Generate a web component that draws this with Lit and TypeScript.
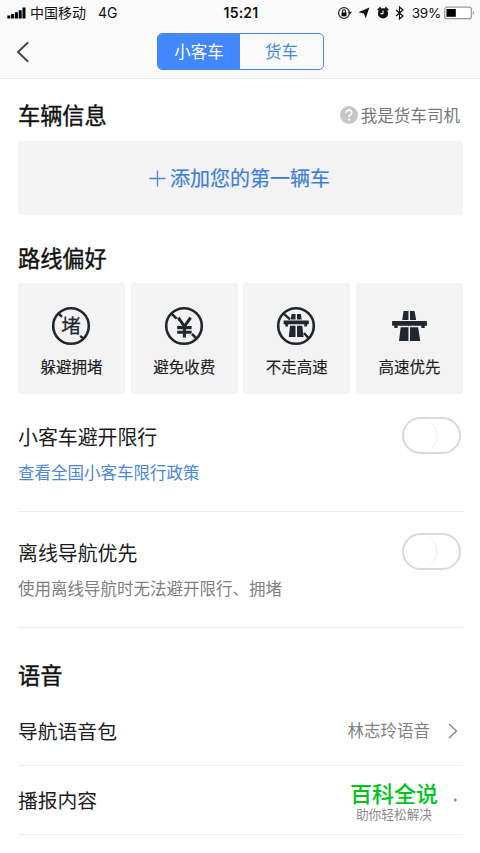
import { LitElement, html, svg, css } from "lit";
import { customElement, property } from "lit/decorators.js";

const INK = "#22262f";

const ban = (inner: unknown) => svg`
  <circle cx="20" cy="20" r="17.8" fill="none" stroke=${INK} stroke-width="2.6"/>
  ${inner}`;

const icons: Record<string, unknown> = {
  jam: ban(svg`
    <path d="M7.600 7.600l3.400 3.200M29.200 29.800l3.600 3" fill="none" stroke=${INK} stroke-width="2.400"/>
    <text x="20" y="27" text-anchor="middle" class="glyph">堵</text>`),
  toll: ban(svg`
    <path d="M7.600 7.600l5 5M28 28l5 5" stroke=${INK} stroke-width="2.600"/>
    <path d="M14.200 11.700l6.200 8.700 6.200-8.700M13.200 21.600h14.400M13.200 26.300h14.400M20.400 20v11.500" fill="none" stroke=${INK} stroke-width="3.100"/>`),
  noHighway: ban(svg`
    <path d="M7.400 7.400l6.600 6M28 27l5 5.600" stroke=${INK} stroke-width="2.400"/>
    <path d="M15.600 8h3.900v5.600h-4.700zM21 8h3.900l.8 5.600H21zM7.600 14.400h25.200v3.900h-1.700v2.300h-2.800v-2.300h-16.200v2.300H9.300v-2.300H7.600zM14 19.800h5.500V31h-6.700zM21 19.800h5.300L27.600 31H21z" fill=${INK}/>`),
  highway: svg`
    <path d="M14.600 4.900h4.900v9.100h-6.300zM21 4.900h4.500l1.700 9.100H21zM3.100 14.900h34.800v4.800h-2.200v2.300h-3.300v-2.300H8.600V22H5.300v-2.300H3.100zM11.700 21.200h7.800v13.700h-9.500zM21 21.200h8.100l2.200 13.700H21z" fill=${INK}/>`,
};

@customElement("pref-card")
class PrefCard extends LitElement {
  @property() icon = "";
  @property() label = "";
  static styles = css`
    :host { display: flex; flex-direction: column; align-items: center; background: #f3f3f3; border-radius: 3px; height: 111px; box-sizing: border-box; padding-top: 23px; }
    svg { display: block; width: 40px; height: 40px; margin-right: 1px; }
    .glyph { font: 400 19.5px "Noto Sans CJK SC", sans-serif; fill: #22262f; stroke: #22262f; stroke-width: .25px; }
    .label { margin-top: 8px; line-height: 24px; font-size: 15.5px; -webkit-text-stroke: .15px #1c1c1e; color: #1c1c1e; white-space: nowrap; }
  `;
  render() {
    return html`<svg viewBox="0 0 40 40">${icons[this.icon]}</svg><div class="label">${this.label}</div>`;
  }
}

@customElement("switch-row")
class SwitchRow extends LitElement {
  @property() heading = "";
  @property() note = "";
  @property({ type: Boolean }) link = false;
  static styles = css`
    :host { display: flex; justify-content: space-between; height: 116px; box-sizing: border-box; border-bottom: 1px solid #ededed; padding: 21px 2.5px 0 0; }
    .heading { font-size: 19.9px; line-height: 40px; color: #1c1c1e; }
    .note { font-size: 16.5px; line-height: 30px; color: #808080; }
    .link { color: #4a86dc; }
    .switch { width: 59px; height: 37px; box-sizing: border-box; border: 2px solid #d9d9d9; border-radius: 19px; background: #fff; }
    .knob { width: 34px; height: 33px; border-radius: 17px; box-sizing: border-box; border-right: 2px solid #f3f3f3; }
  `;
  render() {
    return html`
      <div>
        <div class="heading">${this.heading}</div>
        <div class="note ${this.link ? "link" : ""}">${this.note}</div>
      </div>
      <div class="switch"><div class="knob"></div></div>`;
  }
}

@customElement("app-root")
class AppRoot extends LitElement {
  static styles = css`
    :host { display: block; width: 480px; height: 853px; overflow: hidden; background: #fff; color: #1c1c1e; font-family: "Noto Sans CJK SC", sans-serif; }
    svg { display: block; }
    .top { height: 79px; box-sizing: border-box; background: #fafafa; border-bottom: 1px solid #ebebeb; }
    .status { display: grid; grid-template-columns: 1fr auto 1fr; align-items: center; height: 25px; padding: 0 5px 0 7px; color: #111; }
    .left, .right { display: flex; align-items: center; }
    .right { justify-content: flex-end; }
    .carrier { font-size: 14px; line-height: 22px; margin: 0 0 2px 4px; }
    .net { font: 14px/24px Inter, sans-serif; margin-left: 12px; }
    .time { font: 600 14px/24px Inter, sans-serif; letter-spacing: .2px; }
    .percent { font: 13.5px/24px Inter, sans-serif; margin: 0 3px 0 2px; letter-spacing: -.2px; }
    .nav { display: grid; grid-template-columns: 157px 167px; height: 53px; align-items: center; }
    .back { margin-left: 16px; }
    .tabs { display: grid; grid-template-columns: 82px 1fr; height: 37px; box-sizing: border-box; border: 1px solid #4a8ade; border-radius: 5px; overflow: hidden; font-size: 16.5px; line-height: 35px; text-align: center; }
    .tab { color: #4a8ade; }
    .on { background: #4287fb; color: #fff; }
    .main { padding: 0 17px 0 18px; }
    .title { font-size: 22.2px; -webkit-text-stroke: .4px #111; line-height: 32px; color: #111; }
    .head { display: flex; justify-content: space-between; align-items: center; height: 32px; padding: 19px 3px 11px 0; }
    .driver { display: flex; align-items: center; gap: 3px; padding-top: 2px; font-size: 16.55px; line-height: 30px; color: #777; }
    .add { display: flex; align-items: center; justify-content: center; gap: 4px; height: 74px; padding-right: 2px; border-radius: 4px; background: #f3f3f3; color: #3f7edb; font-size: 20px; -webkit-text-stroke: .2px #3f7edb; line-height: 30px; }
    .route { margin-top: 26px; }
    .cards { display: grid; grid-template-columns: repeat(4, 107px); justify-content: space-between; margin-top: 10px; }
    .switches { padding-top: 2px; }
    .voice { margin-top: 30px; }
    .rows { padding-top: 7px; }
    .row { display: flex; align-items: center; height: 69px; box-sizing: border-box; border-bottom: 1px solid #ededed; padding-right: 5px; font-size: 19.8px; }
    .name, .value { padding-bottom: 2px; }
    .value { margin-left: auto; margin-right: 18px; font-size: 16.5px; color: #808080; }
    .badge { display: flex; flex-direction: column; align-items: center; margin-left: auto; margin-right: 16px; padding-top: 4px; }
    .brand { font-size: 22px; line-height: 24px; font-weight: 500; color: #00c41d; }
    .slogan { font-size: 12.7px; line-height: 20px; color: #8a8a8a; }
  `;

  render() {
    return html`
      <div class="top">
        <div class="status">
          <div class="left">
            <svg width="19" height="12" viewBox="0 0 19 12"><path d="M.3 8.4h3v3.2h-3zM4.1 7h3v4.6h-3zM7.9 5.3h3v6.3h-3zM11.7 3.2h3v8.4h-3zM15.5.6h3v11h-3z" fill="#000"/></svg>
            <span class="carrier">中国移动</span><span class="net">4G</span>
          </div>
          <div class="time">15:21</div>
          <div class="right">
            <svg width="73" height="14" viewBox="0 0 73 14">
              <circle cx="7" cy="7" r="5.4" fill="none" stroke="#222" stroke-width="1.2"/>
              <path d="M10.8 5.7h4.2l-2.1 3z" fill="#222"/>
              <path d="M4.5 6.5h5v3.8h-5z" fill="#111"/><path d="M5.500 7V5.200a1.500 1.500 0 013 0V7" fill="none" stroke="#111" stroke-width="1.100"/>
              <path d="M32.400 1.500L28.600 12.400 27 7.400l-5.600-1.200z" fill="#111"/>
              <circle cx="46" cy="7.400" r="5.100" fill="#111"/>
              <path d="M40.800 4.200l3-2.700M51.200 4.200l-3-2.700" stroke="#111" stroke-width="1.800"/>
              <path d="M46 4.400v3.200h-2.600" fill="none" stroke="#fff" stroke-width="1.100"/>
              <path d="M59 4l7 6-3.500 3V1L66 4l-7 6" fill="none" stroke="#111" stroke-width="1.200"/>
            </svg>
            <span class="percent">39%</span>
            <svg width="31" height="14" viewBox="0 0 31 14">
              <rect x=".7" y="1.2" width="26.6" height="11.4" rx="2.2" fill="#fff" stroke="#999" stroke-width="1.2"/>
              <path d="M2.4 3h9.4v7.8H2.4z" fill="#000"/><path d="M28.8 5c1.6.6 1.6 3.2 0 3.8z" fill="#888"/>
            </svg>
          </div>
        </div>
        <div class="nav">
          <svg class="back" width="14" height="22" viewBox="0 0 14 22"><path d="M12.200 1.200L2 11l10.200 9.800" fill="none" stroke="#444" stroke-width="1.900"/></svg>
          <div class="tabs"><div class="tab on">小客车</div><div class="tab">货车</div></div>
        </div>
      </div>
      <div class="main">
        <div class="head">
          <div class="title">车辆信息</div>
          <div class="driver">
            <svg width="18" height="18" viewBox="0 0 18 18"><circle cx="9" cy="9" r="9" fill="#c6c6c6"/><path d="M6.300 7a2.700 2.500 0 115.200.5C11 9 9 9 9 11M9 12.600v1.800" fill="none" stroke="#fff" stroke-width="1.800"/></svg>
            <span>我是货车司机</span>
          </div>
        </div>
        <div class="add">
          <svg width="17" height="17" viewBox="0 0 17 17"><path d="M8.500 .5v16M.5 8.500h16" stroke="#4a86dc" stroke-width="1.300"/></svg>
          <span>添加您的第一辆车</span>
        </div>
        <div class="title route">路线偏好</div>
        <div class="cards">
          <pref-card icon="jam" label="躲避拥堵"></pref-card>
          <pref-card icon="toll" label="避免收费"></pref-card>
          <pref-card icon="noHighway" label="不走高速"></pref-card>
          <pref-card icon="highway" label="高速优先"></pref-card>
        </div>
        <div class="switches">
          <switch-row heading="小客车避开限行" note="查看全国小客车限行政策" link></switch-row>
          <switch-row heading="离线导航优先" note="使用离线导航时无法避开限行、拥堵"></switch-row>
        </div>
        <div class="title voice">语音</div>
        <div class="rows">
          <div class="row">
            <span class="name">导航语音包</span><span class="value">林志玲语音</span>
            <svg width="10" height="16" viewBox="0 0 10 16"><path d="M1 1l7.500 7L1 15" fill="none" stroke="#8a8a8a" stroke-width="1.500"/></svg>
          </div>
          <div class="row">
            <span class="name">播报内容</span>
            <div class="badge"><span class="brand">百科全说</span><span class="slogan">助你轻松解决</span></div>
            <svg width="4" height="6" viewBox="0 0 4 6"><path d="M.5 .8L3 3 .5 5.200z" fill="#777"/></svg>
          </div>
        </div>
      </div>`;
  }
}
